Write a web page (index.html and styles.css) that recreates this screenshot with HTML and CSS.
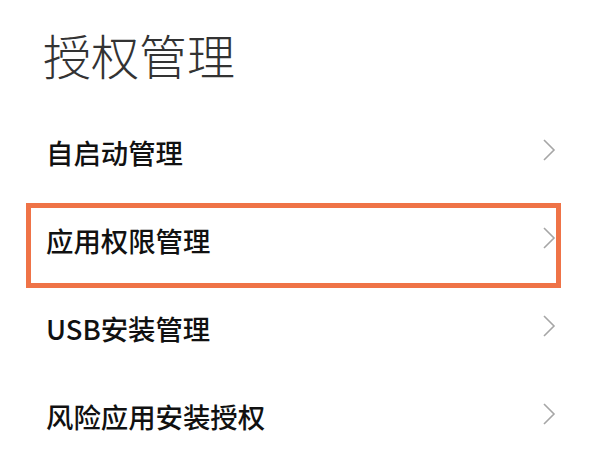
FILE: index.html
```html
<!DOCTYPE html>
<html lang="zh-CN">
<head>
<meta charset="utf-8">
<title>授权管理</title>
<link rel="stylesheet" href="styles.css">
</head>
<body>
<div class="page">
  <h1 class="title">授权管理</h1>
  <ul class="list">
    <li class="row"><span class="label">自启动管理</span><svg class="chev" viewBox="0 0 14 24" width="14" height="24"><polyline points="2,2 12,12 2,22"/></svg></li>
    <li class="row highlighted"><span class="label">应用权限管理</span><svg class="chev" viewBox="0 0 14 24" width="14" height="24"><polyline points="2,2 12,12 2,22"/></svg></li>
    <li class="row"><span class="label">USB安装管理</span><svg class="chev" viewBox="0 0 14 24" width="14" height="24"><polyline points="2,2 12,12 2,22"/></svg></li>
    <li class="row"><span class="label">风险应用安装授权</span><svg class="chev" viewBox="0 0 14 24" width="14" height="24"><polyline points="2,2 12,12 2,22"/></svg></li>
  </ul>
</div>
</body>
</html>
```

FILE: styles.css
```css
html, body {
  margin: 0;
  padding: 0;
  background: #ffffff;
}
.page {
  width: 600px;
  height: 450px;
  overflow: hidden;
  font-family: "Noto Sans CJK SC", "Noto Sans", sans-serif;
}
.title {
  margin: 0;
  padding: 30px 0 0 43px;
  font-size: 48px;
  line-height: 48px;
  font-weight: 300;
  color: #333333;
}
.list {
  list-style: none;
  margin: 0;
  padding: 30px 0 0 0;
}
.row {
  position: relative;
  height: 88px;
  display: flex;
  align-items: center;
  justify-content: space-between;
  padding: 0 44px 0 46px;
}
.label {
  font-size: 27.4px;
  line-height: 28px;
  font-weight: 500;
  color: #111111;
}
.chev {
  margin-top: -5px;
}
.chev polyline {
  fill: none;
  stroke: #a6a6a6;
  stroke-width: 1.6;
}
.highlighted::after {
  content: "";
  position: absolute;
  left: 26px;
  right: 39px;
  top: 7px;
  bottom: -4px;
  border: 5px solid #ef7347;
  pointer-events: none;
}
```
